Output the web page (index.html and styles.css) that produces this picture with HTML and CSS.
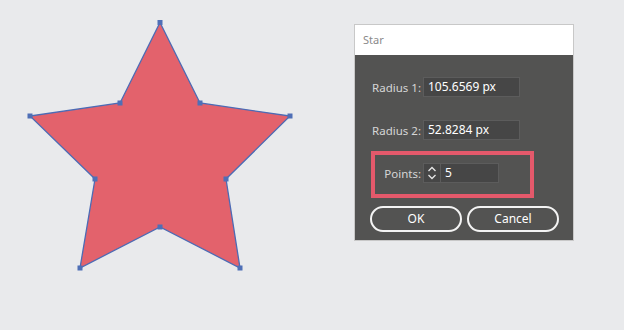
FILE: index.html
```html
<!DOCTYPE html>
<html>
<head>
<meta charset="utf-8">
<link rel="stylesheet" href="styles.css">
</head>
<body>
<div class="stage">
  <svg class="canvas" width="354" height="300" viewBox="0 0 354 300">
    <polygon class="star" points="160,22.5 200,103 290,116 226,179 240,268 160,227 80,268 95,179 30,116 120,103"/>
    <g class="anchors">
      <rect x="157.5" y="20" width="5" height="5"/>
      <rect x="197.5" y="100.5" width="5" height="5"/>
      <rect x="287.5" y="113.5" width="5" height="5"/>
      <rect x="223.5" y="176.5" width="5" height="5"/>
      <rect x="237.5" y="265.5" width="5" height="5"/>
      <rect x="157.5" y="224.5" width="5" height="5"/>
      <rect x="77.5" y="265.5" width="5" height="5"/>
      <rect x="92.5" y="176.5" width="5" height="5"/>
      <rect x="27.5" y="113.5" width="5" height="5"/>
      <rect x="117.5" y="100.5" width="5" height="5"/>
    </g>
  </svg>
  <div class="dialog">
    <div class="title">Star</div>
    <div class="body">
      <div class="row">
        <span class="label">Radius 1:</span>
        <span class="field">105.6569 px</span>
      </div>
      <div class="row row2">
        <span class="label">Radius 2:</span>
        <span class="field">52.8284 px</span>
      </div>
      <div class="highlight">
        <div class="row">
          <span class="label plabel">Points:</span>
          <span class="spin">
            <svg width="12" height="18" viewBox="0 0 12 18">
              <path d="M2.5 7 L6 3.5 L9.5 7" />
              <path d="M2.5 11 L6 14.5 L9.5 11" />
            </svg>
          </span>
          <span class="field small">5</span>
        </div>
      </div>
      <div class="buttons">
        <span class="btn">OK</span>
        <span class="btn">Cancel</span>
      </div>
    </div>
  </div>
</div>
</body>
</html>
```
FILE: styles.css
```css
html, body {
  margin: 0;
  padding: 0;
  background: #e9eaec;
  width: 624px;
  height: 330px;
  overflow: hidden;
  font-family: "Noto Sans", "Open Sans", sans-serif;
}
.stage {
  display: flex;
  align-items: flex-start;
}
.canvas {
  display: block;
  flex: none;
}
.star {
  fill: #e3626c;
  stroke: #4c6bb5;
  stroke-width: 1.3;
  stroke-linejoin: miter;
}
.anchors rect {
  fill: #4f6fb6;
}
.dialog {
  margin-top: 24px;
  width: 218px;
  border: 1px solid #c8c8c8;
  background: #535352;
}
.title {
  height: 30px;
  background: #ffffff;
  color: #8a8a8a;
  font-size: 11px;
  line-height: 30px;
  padding-left: 8px;
}
.body {
  padding: 22px 0 0 16px;
  height: 185px;
  box-sizing: border-box;
}
.row {
  display: flex;
  align-items: center;
  height: 20px;
}
.row2 {
  margin-top: 23px;
}
.label {
  flex: none;
  width: 50px;
  display: flex;
  justify-content: flex-end;
  white-space: nowrap;
  color: #d6d6d6;
  font-size: 11.5px;
  margin-right: 2px;
}
.field {
  width: 97px;
  height: 20px;
  box-sizing: border-box;
  background: #464646;
  border: 1px solid #5c5c5c;
  color: #ffffff;
  font-size: 12px;
  line-height: 18px;
  padding-left: 4px;
}
.field.small {
  width: 58px;
  border-left: none;
}
.highlight {
  margin-top: 11px;
  width: 163px;
  height: 47px;
  box-sizing: border-box;
  border: 4px solid #e4596b;
  padding-top: 8px;
}
.plabel {
  width: 46px;
}
.spin {
  width: 18px;
  height: 20px;
  box-sizing: border-box;
  background: #464646;
  border: 1px solid #5c5c5c;
  display: flex;
  align-items: center;
  justify-content: center;
}
.spin svg {
  display: block;
}
.spin path {
  fill: none;
  stroke: #e6e6e6;
  stroke-width: 1.3;
}
.buttons {
  display: flex;
  gap: 5px;
  margin-top: 8px;
  margin-left: -1px;
}
.btn {
  width: 92px;
  height: 26px;
  box-sizing: border-box;
  border: 2px solid #f4f4f4;
  border-radius: 13px;
  color: #ffffff;
  font-size: 12px;
  line-height: 22px;
  text-align: center;
}
```
